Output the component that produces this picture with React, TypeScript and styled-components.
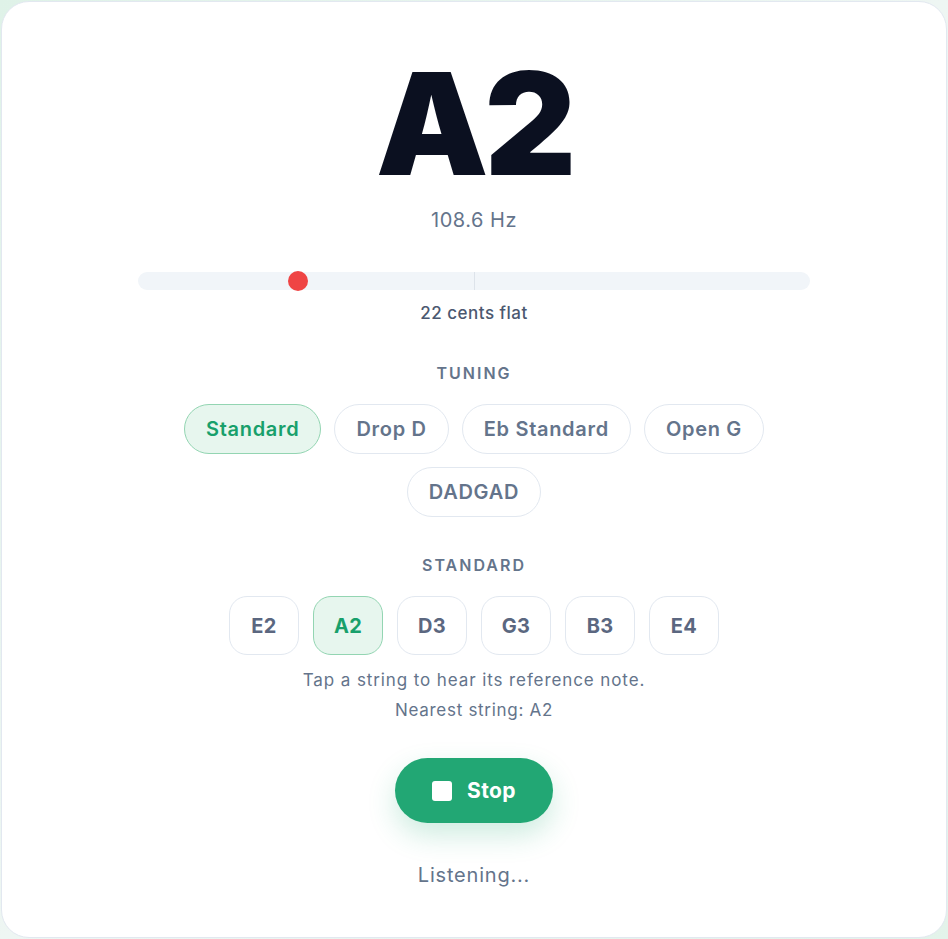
import React from "react";
import styled, { createGlobalStyle } from "styled-components";

const Global = createGlobalStyle`
  html, body { margin: 0; padding: 0; }
  body {
    background: linear-gradient(135deg, #dff2e8 0%, #eef6f3 50%, #e3f3ea 100%);
    font-family: "Inter", "Noto Sans", sans-serif;
    -webkit-font-smoothing: antialiased;
  }
  #root { padding: 1px; }
  * { box-sizing: border-box; }
`;

const Card = styled.main`
  min-height: calc(100vh - 2px);
  background: #ffffff;
  border: 1px solid #e2e8f0;
  border-radius: 28px;
  display: flex;
  flex-direction: column;
  align-items: center;
  padding-top: 50px;
  padding-bottom: 40px;
`;

const Note = styled.div`
  font-size: 142px;
  line-height: 142px;
  height: 142px;
  font-weight: 900;
  color: #0b1020;
  letter-spacing: -4px;
`;

const Freq = styled.div`
  margin-top: 12px;
  font-size: 20px;
  line-height: 28px;
  letter-spacing: 0.5px;
  color: #64748b;
`;

const Meter = styled.div`
  position: relative;
  margin-top: 38px;
  width: 672px;
  height: 18px;
  border-radius: 9px;
  background: #f1f5f9;
`;

const CenterMark = styled.div`
  position: absolute;
  left: 50%;
  top: 0;
  bottom: 0;
  width: 1px;
  background: #dde3ea;
`;

const Dot = styled.div`
  position: absolute;
  top: -1px;
  width: 20px;
  height: 20px;
  margin-left: -10px;
  border-radius: 50%;
  background: #ef4444;
`;

const Cents = styled.div`
  margin-top: 12px;
  font-size: 17px;
  line-height: 22px;
  font-weight: 500;
  letter-spacing: 0.5px;
  color: #4b5870;
`;

const Label = styled.div<{ $gap: number }>`
  margin-top: ${(p) => p.$gap}px;
  font-size: 16px;
  line-height: 20px;
  font-weight: 600;
  letter-spacing: 2px;
  color: #64748b;
`;

const ChipRow = styled.div`
  margin-top: 21px;
  display: flex;
  flex-wrap: wrap;
  justify-content: center;
  gap: 13px;
  width: 620px;
`;

const Chip = styled.button<{ $active?: boolean }>`
  height: 50px;
  padding: 0 21px;
  border-radius: 25px;
  font-family: inherit;
  font-size: 20px;
  font-weight: 600;
  letter-spacing: 0.7px;
  border: 1.5px solid ${(p) => (p.$active ? "#93d5b2" : "#e2e8f0")};
  background: ${(p) => (p.$active ? "#e7f6ee" : "#ffffff")};
  color: ${(p) => (p.$active ? "#18a06b" : "#64748b")};
`;

const StringRow = styled.div`
  margin-top: 21px;
  display: flex;
  gap: 14px;
`;

const StringBtn = styled.button<{ $active?: boolean }>`
  width: 70px;
  height: 59px;
  border-radius: 18px;
  font-family: inherit;
  font-size: 20px;
  font-weight: 700;
  letter-spacing: 0.3px;
  border: 1.5px solid ${(p) => (p.$active ? "#93d5b2" : "#e2e8f0")};
  background: ${(p) => (p.$active ? "#e7f6ee" : "#ffffff")};
  color: ${(p) => (p.$active ? "#18a06b" : "#5b6780")};
`;

const Hint = styled.div`
  margin-top: 13px;
  font-size: 17px;
  line-height: 24px;
  letter-spacing: 0.9px;
  color: #64748b;
`;

const Nearest = styled.div`
  margin-top: 7px;
  font-size: 17px;
  line-height: 22px;
  letter-spacing: 0.7px;
  color: #64748b;
`;

const StopButton = styled.button`
  margin-top: 37px;
  width: 158px;
  height: 65px;
  border: none;
  border-radius: 33px;
  background: #22a774;
  color: #ffffff;
  font-family: inherit;
  font-size: 21px;
  font-weight: 700;
  letter-spacing: 0.4px;
  display: flex;
  align-items: center;
  justify-content: center;
  gap: 15px;
  box-shadow: 0 12px 28px rgba(34, 167, 116, 0.22);
`;

const StopIcon = styled.span`
  width: 20px;
  height: 20px;
  border-radius: 3px;
  background: #ffffff;
`;

const Status = styled.div`
  margin-top: 38px;
  font-size: 20px;
  line-height: 28px;
  letter-spacing: 0.8px;
  color: #64748b;
`;

const tunings = ["Standard", "Drop D", "Eb Standard", "Open G", "DADGAD"];
const strings = ["E2", "A2", "D3", "G3", "B3", "E4"];

export default function App() {
  const cents = -22;
  const pos = 50 + (cents / 42) * 50;
  return (
    <>
      <Global />
      <Card>
        <Note>A2</Note>
        <Freq>108.6 Hz</Freq>
        <Meter>
          <CenterMark />
          <Dot style={{ left: `${pos}%` }} />
        </Meter>
        <Cents>22 cents flat</Cents>
        <Label $gap={39}>TUNING</Label>
        <ChipRow>
          {tunings.map((t) => (
            <Chip key={t} $active={t === "Standard"}>
              {t}
            </Chip>
          ))}
        </ChipRow>
        <Label $gap={38}>STANDARD</Label>
        <StringRow>
          {strings.map((s) => (
            <StringBtn key={s} $active={s === "A2"}>
              {s}
            </StringBtn>
          ))}
        </StringRow>
        <Hint>Tap a string to hear its reference note.</Hint>
        <Nearest>Nearest string: A2</Nearest>
        <StopButton>
          <StopIcon />
          Stop
        </StopButton>
        <Status>Listening...</Status>
      </Card>
    </>
  );
}
